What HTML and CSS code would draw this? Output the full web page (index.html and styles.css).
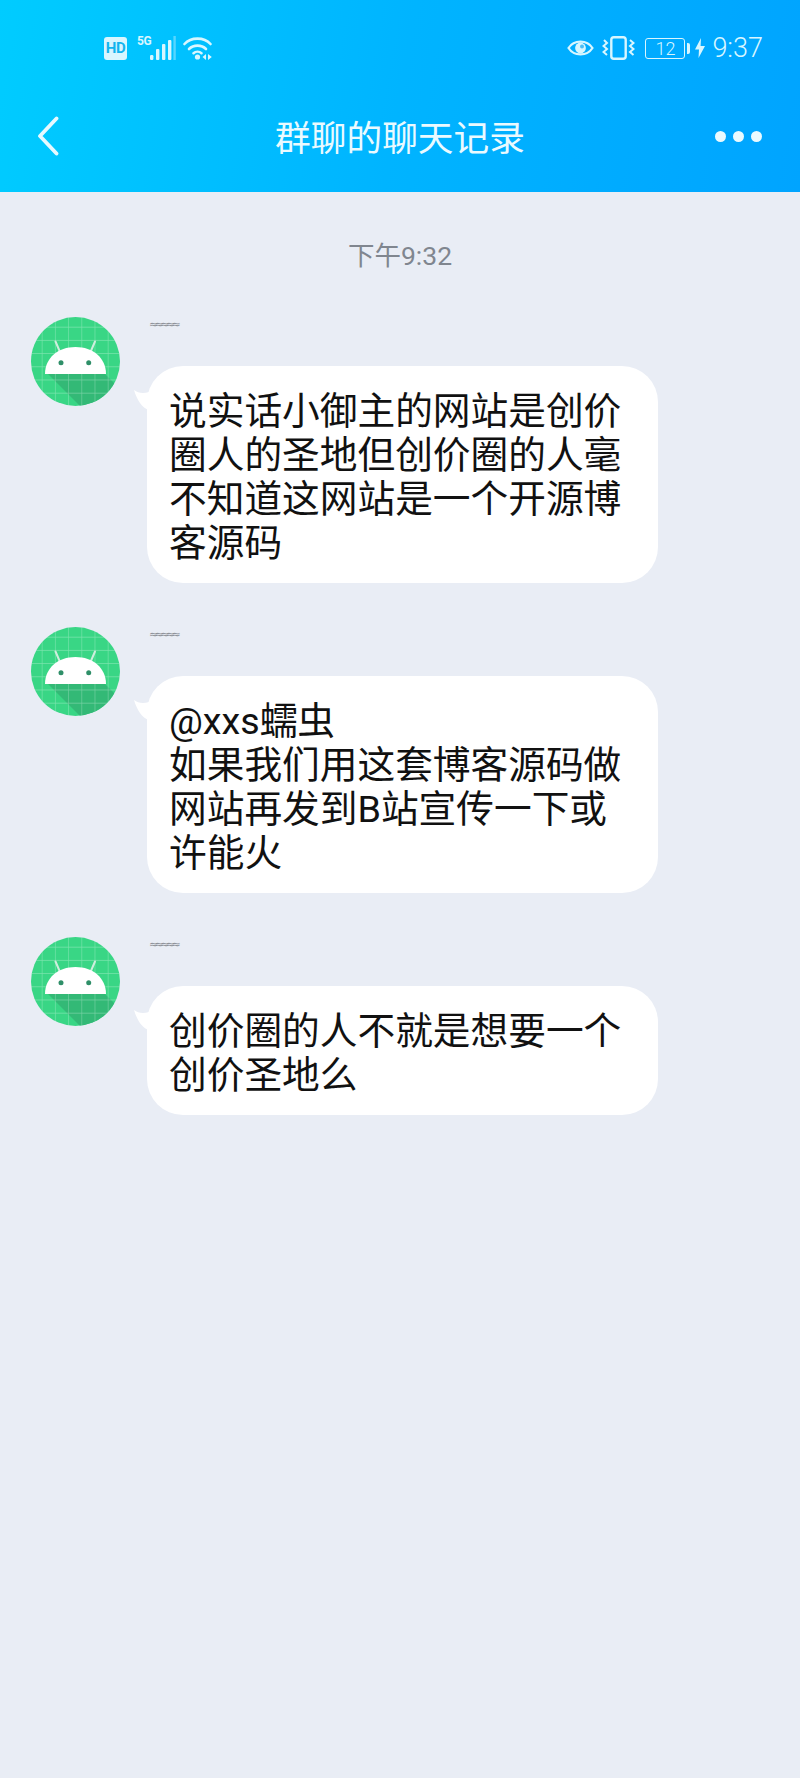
FILE: index.html
```html
<!DOCTYPE html>
<html>
  <head>
    <meta charset="utf-8">
    <title>群聊的聊天记录</title>
    <link rel="stylesheet" href="styles.css">
  </head>
  <body>
    <div class="header">
      <div class="status-bar">
        <div class="status-left">
          <span class="hd">HD</span>
          <span class="net">5G</span>
          <svg class="signal" width="26" height="24" viewBox="0 0 26 24">
            <rect x="0" y="19" width="3.4" height="5" rx="1.2" fill="#d8f6ff"/>
            <rect x="6" y="13" width="3.4" height="11" rx="1" fill="#d8f6ff"/>
            <rect x="12" y="8" width="3.4" height="16" rx="1" fill="#d8f6ff"/>
            <rect x="18" y="4" width="3.4" height="20" rx="1" fill="#d8f6ff"/>
            <rect x="23.4" y="0" width="2.4" height="24" fill="#d8f6ff" opacity="0.4"/>
          </svg>
          <svg class="wifi" width="30" height="24" viewBox="0 0 30 24">
            <g fill="none" stroke="#d8f6ff" stroke-width="2.6" stroke-linecap="round">
              <path d="M1.5 8C8 0.8 21 0.8 27.5 8"/>
              <path d="M6 13C10.5 8.5 18.5 8.5 23 13"/>
              <path d="M10.5 17.2C12.8 15.2 16.2 15.2 18.5 17.2"/>
            </g>
            <circle cx="14.5" cy="21" r="2.6" fill="#d8f6ff"/>
            <path d="M19.5 21L23 18V24Z M25 18L28.8 21L25 24Z" fill="#d8f6ff"/>
          </svg>
        </div>
        <div class="status-right">
          <svg class="eye" width="27" height="20" viewBox="0 0 27 20">
            <path d="M1.5 10C7 1.5 20 1.5 25.5 10C20 18.5 7 18.5 1.5 10Z" fill="none" stroke="#d8f6ff" stroke-width="2.2"/>
            <circle cx="13.5" cy="10" r="5.4" fill="#d8f6ff"/>
            <circle cx="15" cy="8.5" r="2" fill="#4dbdf5"/>
          </svg>
          <svg class="vibrate" width="33" height="24" viewBox="0 0 33 24">
            <rect x="9.3" y="1.2" width="14.4" height="21.6" rx="2.6" fill="none" stroke="#d8f6ff" stroke-width="2.4"/>
            <path d="M2 4L5 7L1.5 10L5 13L1.5 16L5 19" fill="none" stroke="#d8f6ff" stroke-width="2"/>
            <path d="M28 4L31.5 7L28 10L31.5 13L28 16L31.5 19" fill="none" stroke="#d8f6ff" stroke-width="2"/>
          </svg>
          <div class="battery"><span class="battery-level">12</span></div>
          <svg class="bolt" width="10" height="20" viewBox="0 0 10 20">
            <path d="M6 0L0 11.5H4L3.5 20L10 8H5.6Z" fill="#d8f6ff"/>
          </svg>
          <span class="clock">9:37</span>
        </div>
      </div>
      <div class="title-bar">
        <svg class="back" width="22" height="40" viewBox="0 0 22 40">
          <path d="M19.5 2.5L3 20L19.5 37.5" fill="none" stroke="#e6f9ff" stroke-width="3.8" stroke-linecap="round" stroke-linejoin="round"/>
        </svg>
        <h1 class="title">群聊的聊天记录</h1>
        <div class="more">
          <span class="dot"></span>
          <span class="dot"></span>
          <span class="dot"></span>
        </div>
      </div>
    </div>

    <div class="chat">
      <div class="time">下午9:32</div>

      <div class="message">
        <svg class="avatar" width="90" height="90" viewBox="0 0 90 90">
          <defs>
            <clipPath id="circle"><circle cx="44.5" cy="45.5" r="44.5"/></clipPath>
            <pattern id="grid" width="13.2" height="13.2" patternUnits="userSpaceOnUse" x="10.7" y="10.7">
              <path d="M0 0H13.2M0 0V13.2" fill="none" stroke="#ffffff" stroke-opacity="0.34" stroke-width="1.2"/>
            </pattern>
          </defs>
          <g id="droid">
            <g clip-path="url(#circle)">
              <rect width="90" height="92" fill="#39d685"/>
              <path d="M17 58H74L108 92H51Z" fill="#33b976"/>
              <rect width="90" height="92" fill="url(#grid)"/>
            </g>
            <path d="M29 36L24.5 25.5M59.5 36L64 25.5" stroke="#cfeedd" stroke-width="2" stroke-linecap="round"/>
            <path d="M14 58C14 42 27 31 44.5 31C62 31 75 42 75 58Z" fill="#ffffff"/>
            <circle cx="30" cy="46.7" r="2.5" fill="#2f8f68"/>
            <circle cx="57.7" cy="46.7" r="2.5" fill="#2f8f68"/>
          </g>
        </svg>
        <div class="message-body">
          <div class="name">≈≈≈≈≈</div>
          <div class="bubble">说实话小御主的网站是创价圈人的圣地但创价圈的人毫不知道这网站是一个开源博客源码</div>
        </div>
      </div>

      <div class="message">
        <svg class="avatar" width="90" height="90" viewBox="0 0 90 90"><use href="#droid"/></svg>
        <div class="message-body">
          <div class="name">≈≈≈≈≈</div>
          <div class="bubble">@xxs蠕虫<br>如果我们用这套博客源码做网站再发到B站宣传一下或许能火</div>
        </div>
      </div>

      <div class="message">
        <svg class="avatar" width="90" height="90" viewBox="0 0 90 90"><use href="#droid"/></svg>
        <div class="message-body">
          <div class="name">≈≈≈≈≈</div>
          <div class="bubble">创价圈的人不就是想要一个创价圣地么</div>
        </div>
      </div>
    </div>
  </body>
</html>
```

FILE: styles.css
```css
* {
  box-sizing: border-box;
}

body {
  margin: 0;
  min-height: 1778px;
  background-color: #e9edf5;
  font-family: Roboto, "Noto Sans CJK SC", sans-serif;
}

.header {
  height: 192px;
  padding: 36px 37px 0 37px;
  background: linear-gradient(100deg, #00ccff 0%, #00b4ff 50%, #00a4ff 100%);
  color: #d8f6ff;
}

.status-bar {
  display: flex;
  justify-content: space-between;
  align-items: center;
  height: 24px;
  padding-left: 67px;
}

.status-left,
.status-right {
  display: flex;
  align-items: center;
}

.hd {
  width: 23px;
  height: 23px;
  border-radius: 3px;
  background-color: #d8f6ff;
  color: #12b4ee;
  font-size: 15px;
  font-weight: 700;
  line-height: 23px;
  text-align: center;
  letter-spacing: -0.5px;
}

.net {
  align-self: flex-start;
  width: 13px;
  margin-left: 10px;
  font-size: 12px;
  font-weight: 700;
  line-height: 11px;
  letter-spacing: -0.5px;
}

.wifi {
  margin-left: 7px;
}

.vibrate {
  margin-left: 8px;
}

.battery {
  position: relative;
  display: flex;
  align-items: center;
  justify-content: center;
  width: 40px;
  height: 21px;
  margin-left: 10px;
  border: 1.2px solid #d8f6ff;
  border-radius: 3px;
}

.battery::after {
  content: "";
  position: absolute;
  top: 4px;
  right: -6px;
  width: 3px;
  height: 11px;
  background-color: #d8f6ff;
  border-radius: 0 2px 2px 0;
}

.battery-level {
  font-size: 18px;
  font-weight: 300;
}

.bolt {
  margin-left: 10px;
}

.clock {
  margin-left: 7px;
  font-size: 27px;
  font-weight: 300;
  line-height: 24px;
}

.title-bar {
  display: grid;
  grid-template-columns: 1fr auto 1fr;
  align-items: center;
  height: 40px;
  margin-top: 56px;
}

.back {
  justify-self: start;
}

.title {
  margin: 3px 0 -3px 0;
  color: #eafaff;
  font-size: 35.7px;
  font-weight: 400;
  line-height: 40px;
}

.more {
  display: flex;
  justify-self: end;
  gap: 7px;
  margin-right: 1px;
}

.dot {
  width: 11px;
  height: 11px;
  border-radius: 50%;
  background-color: #eafaff;
}

.chat {
  padding: 46px 0 0 31px;
}

.time {
  margin-left: -31px;
  color: #80868f;
  font-size: 26.5px;
  line-height: 36px;
  text-align: center;
}

.message {
  display: flex;
  gap: 26px;
  margin-top: 42px;
}

.message + .message {
  margin-top: 43px;
}

.avatar {
  flex-shrink: 0;
}

.name {
  height: 50px;
  padding: 2px 0 0 2px;
  color: #8a8d94;
  font-family: "DejaVu Sans", sans-serif;
  font-size: 11px;
  line-height: 14px;
  letter-spacing: -3.6px;
}

.bubble {
  position: relative;
  width: 511px;
  padding: 23px 32px 18px 22px;
  border-radius: 36px;
  background-color: #ffffff;
  color: #111111;
  font-size: 37.7px;
  line-height: 44px;
}

.bubble::before {
  content: "";
  position: absolute;
  top: 24px;
  left: -13px;
  width: 15px;
  height: 20px;
  background-color: #ffffff;
  clip-path: path("M0 0C4 3 9 4 15 2V20C8 18 3 10 0 0Z");
}
```
